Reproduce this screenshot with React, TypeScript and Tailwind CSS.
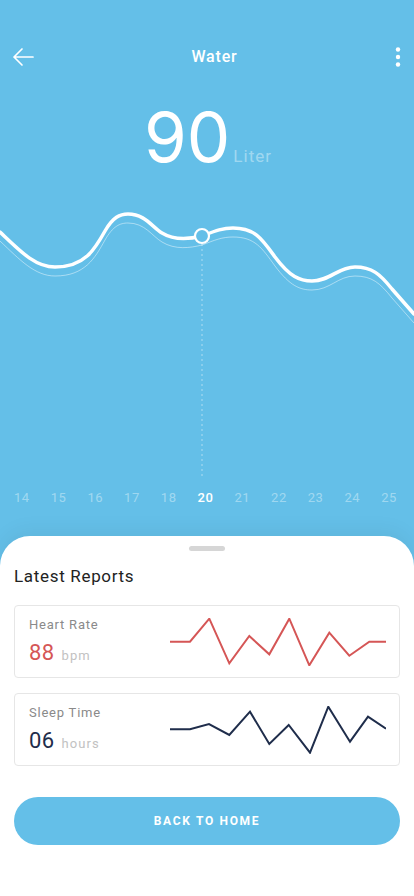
import React from 'react';

const days = ['14', '15', '16', '17', '18', '20', '21', '22', '23', '24', '25'];

const wave =
  'M0 233 C 20 252, 35 268, 55 268 C 85 268, 95 250, 105 232 C 113 218, 120 215, 128 215 C 145 215, 152 228, 162 234 C 175 242, 190 240, 202 237 C 215 232, 222 229, 233 229 C 255 229, 262 240, 275 258 C 290 278, 300 282, 312 282 C 330 282, 338 268, 355 268 C 372 268, 380 275, 392 290 L 414 315';

const heartPts = '0,23.7 20,23.7 39.3,0.7 59.3,45.3 79.3,18 99.3,36.3 119.3,0.7 139.3,47.3 159.3,14.7 179.3,37.7 199.3,23.7 216,23.7';
const sleepPts = '0,23.3 20,23.3 39,18 59.3,29 80,5.7 99.3,38 118.7,19 140,46.7 158.3,0.7 180,35.7 198,10.7 216,22.7';

function ReportCard({ label, value, unit, color, points }: { label: string; value: string; unit: string; color: string; points: string }) {
  return (
    <div className="flex items-center h-[73px] border border-[#e6e6e6] rounded-[4px] pl-[14px] pr-[13px]">
      <div className="flex-1 flex flex-col">
        <div className="text-[13px] leading-[16px] tracking-[0.06em] text-[#8a8a8a]">{label}</div>
        <div className="flex items-baseline mt-[7px]">
          <span className="text-[22px] leading-[26px] tracking-[0.02em]" style={{ color }}>{value}</span>
          <span className="text-[13px] ml-[7px] tracking-[0.08em] text-[#c2c2c2]">{unit}</span>
        </div>
      </div>
      <svg width="216" height="48" viewBox="0 0 216 48" className="shrink-0">
        <polyline points={points} fill="none" stroke={color} strokeWidth="2" strokeLinejoin="miter" />
      </svg>
    </div>
  );
}

export default function App() {
  return (
    <div className="w-full h-[896px] bg-[#64bfe8] flex flex-col overflow-hidden" style={{ fontFamily: 'Roboto, "Noto Sans", sans-serif' }}>
      {/* Header */}
      <div className="flex items-center justify-between h-[26px] mt-[44px] pl-[12px] pr-[13px]">
        <svg width="22" height="22" viewBox="0 0 22 22" fill="none" stroke="white" strokeWidth="1.7" strokeLinecap="round" strokeLinejoin="round">
          <path d="M21 11 H2 M10 3 L2 11 L10 19" />
        </svg>
        <div className="text-white text-[16px] font-medium tracking-[0.05em]">Water</div>
        <svg width="6" height="20" viewBox="0 0 6 20" fill="white">
          <circle cx="3" cy="2.5" r="2.2" />
          <circle cx="3" cy="10" r="2.2" />
          <circle cx="3" cy="17.5" r="2.2" />
        </svg>
      </div>

      {/* Value */}
      <div className="flex items-baseline justify-center mt-[32px] pl-[2px]">
        <span className="text-white text-[69px] leading-[70px] font-[Inter]">90</span>
        <span className="text-white/40 text-[17px] ml-[3px] tracking-[0.06em]">Liter</span>
      </div>

      {/* Chart */}
      <svg width="414" height="307" viewBox="0 173 414 307" className="block">
        <path d={wave} fill="none" stroke="rgba(255,255,255,0.45)" strokeWidth="1" transform="translate(0 9)" />
        <line x1="202" y1="245" x2="202" y2="478" stroke="rgba(255,255,255,0.4)" strokeWidth="1.2" strokeDasharray="2 3" />
        <path d={wave} fill="none" stroke="white" strokeWidth="3.5" strokeLinecap="round" />
        <circle cx="202" cy="237" r="7" fill="#64bfe8" stroke="white" strokeWidth="2.2" />
      </svg>

      {/* Days */}
      <div className="flex justify-between h-[20px] items-center mt-[9px] pl-[14px] pr-[17px]">
        {days.map((d) => (
          <span key={d} className={d === '20' ? 'text-[13px] text-white font-medium tracking-[0.04em]' : 'text-[13px] text-white/40 tracking-[0.04em]'}>
            {d}
          </span>
        ))}
      </div>

      {/* Sheet */}
      <div className="mt-[28px] flex-1 bg-white rounded-t-[30px] shadow-[0_-6px_20px_rgba(0,0,0,0.05)] px-[14px] pt-[10px] flex flex-col">
        <div className="self-center w-[36px] h-[5px] rounded-full bg-[#d6d6d6]" />
        <div className="mt-[13px] text-[17px] leading-[24px] tracking-[0.04em] text-[#222]">Latest Reports</div>
        <div className="mt-[17px] flex flex-col gap-[15px]">
          <ReportCard label="Heart Rate" value="88" unit="bpm" color="#d55656" points={heartPts} />
          <ReportCard label="Sleep Time" value="06" unit="hours" color="#1f2d4b" points={sleepPts} />
        </div>
        <button className="mt-[31px] h-[48px] w-full rounded-full bg-[#64bfe8] text-white text-[12px] font-bold tracking-[0.14em]">
          BACK TO HOME
        </button>
      </div>
    </div>
  );
}
